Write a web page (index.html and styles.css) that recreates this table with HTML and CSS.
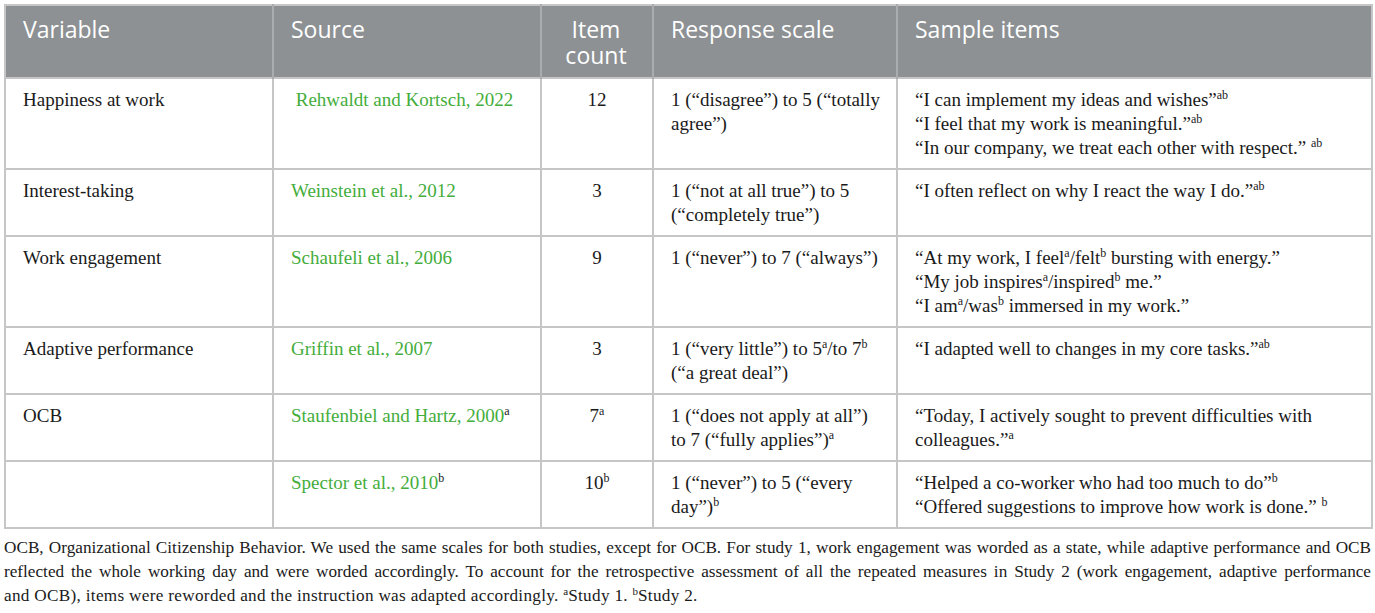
FILE: index.html
```html
<!DOCTYPE html>
<html lang="en">
<head>
<meta charset="utf-8">
<title>Measures</title>
<link rel="stylesheet" href="styles.css">
</head>
<body>
<div class="page">
  <table class="measures">
    <colgroup>
      <col class="c-var">
      <col class="c-src">
      <col class="c-cnt">
      <col class="c-scale">
      <col class="c-items">
    </colgroup>
    <thead>
      <tr>
        <th>Variable</th>
        <th>Source</th>
        <th class="center">Item<br>count</th>
        <th>Response scale</th>
        <th>Sample items</th>
      </tr>
    </thead>
    <tbody>
      <tr>
        <td>Happiness at work</td>
        <td class="src">&nbsp;Rehwaldt and Kortsch, 2022</td>
        <td class="center">12</td>
        <td>1 (“disagree”) to 5 (“totally<br>agree”)</td>
        <td>“I can implement my ideas and wishes”<sup>ab</sup><br>“I feel that my work is meaningful.”<sup>ab</sup><br>“In our company, we treat each other with respect.” <sup>ab</sup></td>
      </tr>
      <tr>
        <td>Interest-taking</td>
        <td class="src">Weinstein et al., 2012</td>
        <td class="center">3</td>
        <td>1 (“not at all true”) to 5<br>(“completely true”)</td>
        <td>“I often reflect on why I react the way I do.”<sup>ab</sup></td>
      </tr>
      <tr>
        <td>Work engagement</td>
        <td class="src">Schaufeli et al., 2006</td>
        <td class="center">9</td>
        <td>1 (“never”) to 7 (“always”)</td>
        <td>“At my work, I feel<sup>a</sup>/felt<sup>b</sup> bursting with energy.”<br>“My job inspires<sup>a</sup>/inspired<sup>b</sup> me.”<br>“I am<sup>a</sup>/was<sup>b</sup> immersed in my work.”</td>
      </tr>
      <tr>
        <td>Adaptive performance</td>
        <td class="src">Griffin et al., 2007</td>
        <td class="center">3</td>
        <td>1 (“very little”) to 5<sup>a</sup>/to 7<sup>b</sup><br>(“a great deal”)</td>
        <td>“I adapted well to changes in my core tasks.”<sup>ab</sup></td>
      </tr>
      <tr>
        <td>OCB</td>
        <td class="src">Staufenbiel and Hartz, 2000<sup>a</sup></td>
        <td class="center">7<sup>a</sup></td>
        <td>1 (“does not apply at all”)<br>to 7 (“fully applies”)<sup>a</sup></td>
        <td>“Today, I actively sought to prevent difficulties with<br>colleagues.”<sup>a</sup></td>
      </tr>
      <tr>
        <td></td>
        <td class="src">Spector et al., 2010<sup>b</sup></td>
        <td class="center">10<sup>b</sup></td>
        <td>1 (“never”) to 5 (“every<br>day”)<sup>b</sup></td>
        <td>“Helped a co-worker who had too much to do”<sup>b</sup><br>“Offered suggestions to improve how work is done.” <sup>b</sup></td>
      </tr>
    </tbody>
  </table>
  <p class="note"><span class="line full">OCB, Organizational Citizenship Behavior. We used the same scales for both studies, except for OCB. For study 1, work engagement was worded as a state, while adaptive performance and OCB</span><span class="line full">reflected the whole working day and were worded accordingly. To account for the retrospective assessment of all the repeated measures in Study 2 (work engagement, adaptive performance</span><span class="line">and OCB), items were reworded and the instruction was adapted accordingly. <sup>a</sup>Study 1. <sup>b</sup>Study 2.</span></p>
</div>
</body>
</html>
```

FILE: styles.css
```css
html, body {
  margin: 0;
  padding: 0;
  background: #ffffff;
}

.page {
  padding: 4px 4px 0 4px;
  font-family: "Liberation Serif", "Times New Roman", serif;
  color: #1a1a1a;
}

.measures {
  width: 1367px;
  table-layout: fixed;
  border-collapse: collapse;
  border: 2px solid #c6c6c6;
}

.c-var { width: 268px; }
.c-src { width: 268px; }
.c-cnt { width: 112px; }
.c-scale { width: 244px; }
.c-items { width: 475px; }

.measures th {
  background: #8d9194;
  color: #ffffff;
  font-family: "Open Sans", "Liberation Sans", sans-serif;
  font-weight: 400;
  font-size: 23px;
  line-height: 26px;
  text-align: left;
  vertical-align: top;
  padding: 10px 10px 9px 17px;
  border-left: 2px solid #a9adb0;
  height: 52px;
}

.measures th:first-child {
  border-left: none;
}

.measures td {
  font-size: 19px;
  line-height: 24px;
  vertical-align: top;
  padding: 9px 8px 8px 17px;
  border: 2px solid #c6c6c6;
}

.measures .center {
  text-align: center;
  padding-left: 8px;
}

.measures .src {
  color: #44ad3c;
}

.measures sup {
  font-size: 12px;
  line-height: 0;
  vertical-align: 7px;
  color: #1a1a1a;
}

.note {
  margin: 7px 0 0 0;
  font-size: 17.2px;
  line-height: 24px;
  text-align: justify;
}

.note .line {
  display: block;
}

.note .line.full {
  text-align-last: justify;
}

.note .line:last-child {
  letter-spacing: 0.3px;
}

.note sup {
  font-size: 11px;
  line-height: 0;
  vertical-align: 6px;
  letter-spacing: 0;
}
```
